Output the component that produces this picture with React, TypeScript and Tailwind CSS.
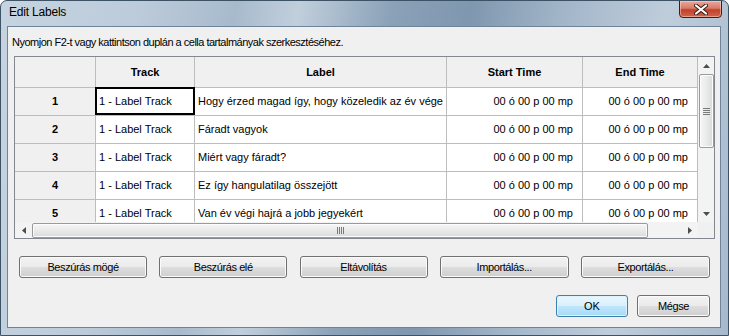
import React from 'react';

const rows = [
  { n: 1, label: 'Hogy érzed magad így, hogy közeledik az év vége' },
  { n: 2, label: 'Fáradt vagyok' },
  { n: 3, label: 'Miért vagy fáradt?' },
  { n: 4, label: 'Ez így hangulatilag összejött' },
  { n: 5, label: 'Van év végi hajrá a jobb jegyekért' },
];

const btn =
  'h-[22px] rounded-[3px] border border-[#707070] bg-[linear-gradient(to_bottom,#f2f2f2_0%,#ebebeb_48%,#dddddd_52%,#cfcfcf_100%)] shadow-[inset_0_0_0_1px_#fbfbfb] text-[11px] tracking-[-0.4px] text-black flex items-center justify-center';

function Arrow({ dir }: { dir: 'up' | 'down' | 'left' | 'right' }) {
  const pts = {
    up: '0,4 7,4 3.5,0',
    down: '0,0 7,0 3.5,4',
    left: '4,0 4,7 0,3.5',
    right: '0,0 0,7 4,3.5',
  }[dir];
  const vertical = dir === 'up' || dir === 'down';
  return (
    <svg width={vertical ? 7 : 4} height={vertical ? 4 : 7} viewBox={vertical ? '0 0 7 4' : '0 0 4 7'}>
      <polygon points={pts} fill="#4d4d4d" />
    </svg>
  );
}

export default function App() {
  return (
    <div
      className="w-[729px] h-[336px] flex flex-col rounded-t-[7px] border border-[#3e5266] bg-[linear-gradient(100deg,#c6d4e1_0%,#bccbda_18%,#a7bacc_30%,#c1cfdc_38%,#8aa1b8_50%,#7f97af_60%,#a3b6c9_72%,#bfcddb_85%,#a6b9cb_100%)] overflow-hidden"
      style={{ fontFamily: '"Liberation Sans", Arial, sans-serif' }}
    >
      {/* title bar */}
      <div className="h-[25px] flex items-start relative">
        <span className="ml-[8px] mt-[4px] text-[12px] leading-[14px] tracking-[-0.2px] text-black">Edit Labels</span>
        <div className="ml-auto mr-[6px] -mt-px w-[43px] h-[18px] rounded-b-[4px] border border-[#4a1a12] bg-[linear-gradient(to_bottom,#e9a99c_0%,#d87a68_45%,#c2412a_55%,#d0644c_100%)] shadow-[inset_0_0_0_1px_rgba(255,220,210,0.5)] flex items-center justify-center">
          <svg width="14" height="11" viewBox="0 0 14 11">
            <path d="M2 1.5 L12 9.5 M12 1.5 L2 9.5" stroke="#3a1a16" strokeWidth="4" strokeLinecap="round" />
            <path d="M2 1.5 L12 9.5 M12 1.5 L2 9.5" stroke="#ffffff" strokeWidth="2.2" strokeLinecap="round" />
          </svg>
        </div>
      </div>

      {/* client area */}
      <div className="ml-[6px] mr-[7px] w-[714px] h-[302px] border border-[#6f8399] bg-[#f0f0f0] flex flex-col">
        <div className="h-[29px] pl-[4px] pt-[9px] text-[11px] leading-[13px] tracking-[-0.5px] text-black">
          Nyomjon F2-t vagy kattintson duplán a cella tartalmányak szerkesztéséhez.
        </div>

        {/* grid */}
        <div className="ml-[6px] w-[701px] h-[183px] border border-[#828790] bg-white flex flex-col text-[11px] text-black">
          <div className="flex h-[165px]">
            <div className="w-[683px] h-[165px] overflow-hidden">
              <div className="flex h-[31px] bg-[#f0f0f0] font-bold">
                <div className="w-[81px] border-r border-b border-[#bdbdbd]" />
                <div className="w-[99px] border-r border-b border-[#bdbdbd] flex items-center justify-center">Track</div>
                <div className="w-[252px] border-r border-b border-[#bdbdbd] flex items-center justify-center">Label</div>
                <div className="w-[136px] border-r border-b border-[#bdbdbd] flex items-center justify-center">Start Time</div>
                <div className="w-[115px] border-r border-b border-[#bdbdbd] flex items-center justify-center">End Time</div>
              </div>
              {rows.map((r) => (
                <div key={r.n} className="flex h-[28px]">
                  <div className="w-[81px] bg-[#f0f0f0] border-r border-b border-[#bdbdbd] flex items-center justify-center font-bold">{r.n}</div>
                  <div className="w-[99px] relative border-r border-b border-[#bdbdbd] flex items-center pl-[3px]">
                    1 - Label Track
                    {r.n === 1 && <div className="absolute -left-px -top-px w-[100px] h-[28px] border-2 border-black" />}
                  </div>
                  <div className="w-[252px] border-r border-b border-[#bdbdbd] flex items-center pl-[3px] whitespace-nowrap">{r.label}</div>
                  <div className="w-[136px] border-r border-b border-[#bdbdbd] flex items-center justify-end pr-[9px]">00 ó 00 p 00 mp</div>
                  <div className="w-[115px] border-r border-b border-[#bdbdbd] flex items-center justify-end pr-[9px]">00 ó 00 p 00 mp</div>
                </div>
              ))}
            </div>

            {/* vertical scrollbar */}
            <div className="w-[16px] h-[165px] bg-[#f3f3f3] flex flex-col items-center">
              <div className="h-[17px] w-full flex items-center justify-center">
                <Arrow dir="up" />
              </div>
              <div className="ml-px w-[15px] h-[74px] rounded-[2px] border border-[#9a9a9a] bg-[linear-gradient(to_right,#f6f6f6_0%,#eaeaea_50%,#dadada_100%)] shadow-[inset_0_0_0_1px_#fcfcfc] flex flex-col items-center justify-center gap-[1px]">
                <div className="w-[7px] h-px bg-[#7a7a7a]" />
                <div className="w-[7px] h-px bg-[#7a7a7a]" />
                <div className="w-[7px] h-px bg-[#7a7a7a]" />
                <div className="w-[7px] h-px bg-[#7a7a7a]" />
              </div>
              <div className="flex-1" />
              <div className="h-[17px] w-full flex items-center justify-center">
                <Arrow dir="down" />
              </div>
            </div>
          </div>

          {/* horizontal scrollbar */}
          <div className="flex h-[16px]">
            <div className="w-[683px] h-[16px] bg-[#f3f3f3] flex items-center">
              <div className="w-[17px] h-full flex items-center justify-center">
                <Arrow dir="left" />
              </div>
              <div className="mt-px w-[616px] h-[15px] rounded-[2px] border border-[#9a9a9a] bg-[linear-gradient(to_bottom,#f6f6f6_0%,#eaeaea_50%,#dadada_100%)] shadow-[inset_0_0_0_1px_#fcfcfc] flex items-center justify-center gap-[1px]">
                <div className="h-[7px] w-px bg-[#7a7a7a]" />
                <div className="h-[7px] w-px bg-[#7a7a7a]" />
                <div className="h-[7px] w-px bg-[#7a7a7a]" />
                <div className="h-[7px] w-px bg-[#7a7a7a]" />
              </div>
              <div className="flex-1" />
              <div className="w-[17px] h-full flex items-center justify-center">
                <Arrow dir="right" />
              </div>
            </div>
            <div className="w-[16px] h-[16px] bg-[#f0f0f0]" />
          </div>
        </div>

        {/* action buttons */}
        <div className="mt-[17px] ml-[11px] w-[691px] flex justify-between">
          <div className={`${btn} w-[128px]`}>Beszúrás mögé</div>
          <div className={`${btn} w-[128px]`}>Beszúrás elé</div>
          <div className={`${btn} w-[128px]`}>Eltávolítás</div>
          <div className={`${btn} w-[129px]`}>Importálás...</div>
          <div className={`${btn} w-[129px]`}>Exportálás...</div>
        </div>

        <div className="mt-[17px] mr-[10px] flex justify-end gap-[9px]">
          <div className="w-[72px] h-[22px] rounded-[3px] border border-[#3c7fb1] bg-[linear-gradient(to_bottom,#eaf6fd_0%,#d9f0fc_48%,#bee6fd_52%,#a7d9f5_100%)] shadow-[inset_0_0_0_1px_#dff3fd] text-[11px] text-black flex items-center justify-center">
            OK
          </div>
          <div className={`${btn} w-[73px]`}>Mégse</div>
        </div>
      </div>
    </div>
  );
}
